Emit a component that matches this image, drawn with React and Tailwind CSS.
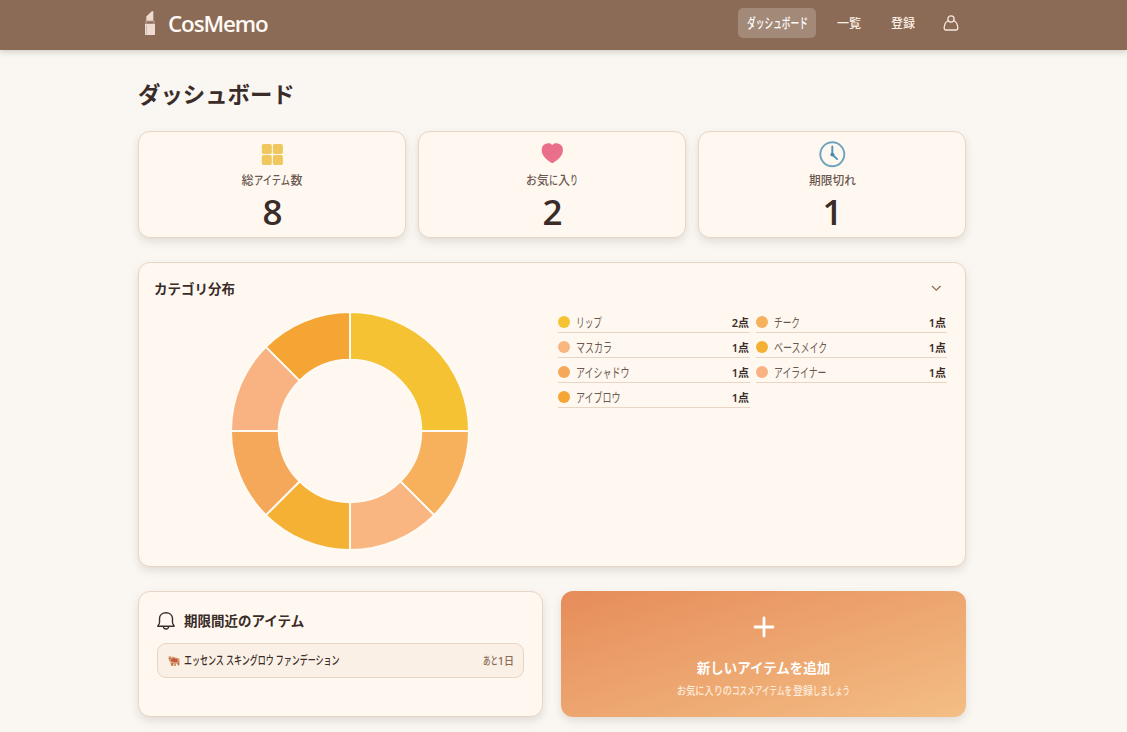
import React from "react";

/* Narrow kana: squeezes a full-width run of text into the given width. */
function Kana({ children, width, size, units }) {
  const n = units || [...children].length;
  return (
    <span className="inline-block whitespace-nowrap align-top" style={{ width }}>
      <span
        className="inline-block origin-left whitespace-nowrap align-top"
        style={{ transform: `scaleX(${width / (n * size)})` }}
      >
        {children}
      </span>
    </span>
  );
}

const card =
  "rounded-[12px] border border-[#e8d5c4] bg-[#fff8f0] shadow-[0_4px_8px_rgba(60,45,35,0.13)]";

const slices = [
  { from: 0, to: 90, color: "#f4c232" },
  { from: 90, to: 135, color: "#f7b05b" },
  { from: 135, to: 180, color: "#f9b681" },
  { from: 180, to: 225, color: "#f5b133" },
  { from: 225, to: 270, color: "#f6a85a" },
  { from: 270, to: 315, color: "#f9b383" },
  { from: 315, to: 360, color: "#f5a533" },
];

const legend = [
  { name: "リップ", width: 26, count: "2", dot: "bg-[#f4c232]" },
  { name: "チーク", width: 26, count: "1", dot: "bg-[#f7b05b]" },
  { name: "マスカラ", width: 36, count: "1", dot: "bg-[#f9b681]" },
  { name: "ベースメイク", width: 54, count: "1", dot: "bg-[#f5b133]" },
  { name: "アイシャドウ", width: 54, count: "1", dot: "bg-[#f6a85a]" },
  { name: "アイライナー", width: 53, count: "1", dot: "bg-[#f9b383]" },
  { name: "アイブロウ", width: 45, count: "1", dot: "bg-[#f5a533]" },
];

function arc({ from, to }) {
  const R = 119;
  const r = 71.3;
  const p = (deg, rad) => {
    const a = ((deg - 90) * Math.PI) / 180;
    return `${120 + rad * Math.cos(a)} ${120 + rad * Math.sin(a)}`;
  };
  return `M${p(from, R)}A${R} ${R} 0 0 1 ${p(to, R)}L${p(to, r)}A${r} ${r} 0 0 0 ${p(from, r)}Z`;
}

function Donut() {
  return (
    <svg width="240" height="240" viewBox="0 0 240 240">
      {slices.map((s) => (
        <path key={s.from} d={arc(s)} fill={s.color} stroke="#fffaf3" strokeWidth="2" />
      ))}
    </svg>
  );
}

function Stat({ icon, label, value }) {
  return (
    <div className={`${card} flex h-[107px] flex-col items-center`}>
      <div className="flex h-[40px] items-end justify-center pb-[4px]">{icon}</div>
      <div className="h-[18px] text-[12px] leading-[18px] font-medium whitespace-nowrap text-[#6b5850]">{label}</div>
      <div className="h-[44px] pl-px font-['Open_Sans'] text-[35px] leading-[44px] font-semibold text-[#3a2c28]">{value}</div>
    </div>
  );
}

export default function App() {
  return (
    <div className="h-[732px] overflow-hidden bg-[#faf7f2] font-['Noto_Sans','Noto_Sans_CJK_JP',sans-serif] text-[#3a2c28]">
      <header className="flex h-[50px] items-center bg-[#8b6b56] pl-[138px] shadow-[0_2px_6px_rgba(60,45,35,0.22)]">
        <div className="-mt-[3px] flex w-[600px] items-center">
          <svg className="-mt-px ml-[6px]" width="12" height="26" viewBox="0 0 12 26">
            <path d="M2.300 11V6.600L7.500 1.400q1.800-1.300 1.800.7V11z" fill="#efdacf" />
            <path d="M1.500 10.500h9V14h-9z" fill="#c3a497" />
            <path d="M2.500 11.500h7v2h-7z" fill="#8a6c60" />
            <path d="M1 14h10v11H1z" fill="#efdacf" />
            <path d="M2.500 15v9.500" stroke="#c9ada0" strokeWidth=".7" />
          </svg>
          <span className="ml-[12px] font-['Open_Sans'] text-[22.400px] leading-[30px] font-semibold tracking-[-1.100px] text-[#fffaf5]">
            CosMemo
          </span>
        </div>
        <nav className="-mt-[4px] flex items-center text-[12px] leading-[18px] text-[#fbefe3]">
          <a className="flex h-[30px] w-[78px] items-center justify-center rounded-[5px] bg-[#a38977] text-[14px] font-medium text-white">
            <Kana width={61} size={14}>ダッシュボード</Kana>
          </a>
          <a className="mt-[2px] ml-[21px] w-[24px] font-medium whitespace-nowrap">一覧</a>
          <a className="mt-[2px] ml-[30px] w-[24px] font-medium whitespace-nowrap">登録</a>
          <svg className="ml-[28px]" width="16" height="18" viewBox="0 0 16 18" fill="none" stroke="#f6e8dc" strokeWidth="1.300">
            <circle cx="8" cy="5" r="3.100" />
            <path d="M5.300 6.500C2.500 7.800 1.500 10.500 1.200 13.500q-.2 2.500 1.800 2.500h10q2 0 1.800-2.500C14.500 10.500 13.500 7.800 10.700 6.500" />
          </svg>
        </nav>
      </header>

      <main className="ml-[138px] w-[828px]">
        <h1 className="pt-[29px] text-[22.400px] leading-[32px] font-bold whitespace-nowrap">ダッシュボード</h1>

        <section className="mt-[20px] grid grid-cols-3 gap-[12px]">
          <Stat
            value="8"
            label={<>総<Kana width={37} size={12}>アイテム</Kana>数</>}
            icon={
              <svg width="28" height="28" viewBox="0 0 28 28" fill="#f0c75e">
                <rect x="3.800" y="4" width="10" height="10" rx="1.800" />
                <rect x="14.900" y="4" width="10" height="10" rx="1.800" />
                <rect x="3.800" y="15.100" width="10" height="10" rx="1.800" />
                <rect x="14.900" y="15.100" width="10" height="10" rx="1.800" />
              </svg>
            }
          />
          <Stat
            value="2"
            label={
              <>
                <Kana width={11} size={12}>お</Kana>気<Kana width={9} size={12}>に</Kana>入
                <Kana width={8} size={12}>り</Kana>
              </>
            }
            icon={
              <svg width="28" height="28" viewBox="0 0 28 28" fill="#ea6f8b">
                <path d="M14.300 5C12.500 3 9.500 3.100 7.200 3.900 4.800 4.800 3.700 7 3.700 9.900c0 6 4.600 9.500 10.600 13.300 6-3.800 10.600-7.300 10.600-13.300 0-2.900-1.100-5.100-3.500-6C19.100 3.100 16.100 3 14.300 5z" />
              </svg>
            }
          />
          <Stat
            value="1"
            label={<Kana width={47} size={12}>期限切れ</Kana>}
            icon={
              <svg width="28" height="28" viewBox="0 0 28 28" fill="none" stroke="#6fa3be" strokeLinecap="round">
                <circle cx="14.300" cy="14.300" r="12" strokeWidth="1.900" />
                <path d="M14.300 6.500v8l4.800 4.600" stroke="#5194b5" strokeWidth="1.900" />
                <circle cx="14.300" cy="14.500" r="1.500" fill="#4389ad" stroke="#4389ad" />
              </svg>
            }
          />
        </section>

        <section className={`${card} mt-[24px] h-[305px]`}>
          <div className="flex h-[48px] items-center justify-between pt-[3px] pr-[23px] pl-[15px]">
            <h2 className="text-[13.500px] leading-[20px] font-bold">カテゴリ分布</h2>
            <svg className="-mt-px" width="12" height="12" viewBox="0 0 12 12" fill="none" stroke="#8b6b56" strokeWidth="1.200">
              <path d="M2 4 6.300 8.200 10.600 4" />
            </svg>
          </div>
          <div className="flex items-start pl-[91px]">
            <Donut />
            <div className="mt-[1px] ml-[88px] grid grid-cols-[192px_191px] gap-x-[6px] gap-y-[4px]">
              {legend.map((l) => (
                <div key={l.name} className="flex h-[21px] items-center border-b border-[#e8d5c4] text-[13px] leading-[18px]">
                  <span className={`mr-[6px] size-[12px] rounded-full ${l.dot}`} />
                  <span className="text-[#6b5850]">
                    <Kana width={l.width} size={13}>{l.name}</Kana>
                  </span>
                  <span className="ml-auto pt-[2px] pr-px text-[11px] font-semibold">{l.count}点</span>
                </div>
              ))}
            </div>
          </div>
        </section>

        <section className="mt-[24px] grid grid-cols-2 gap-[18px]">
          <div className={`${card} h-[126px] px-[18px] pt-[18px]`}>
            <h2 className="flex h-[22px] items-center text-[13.500px] leading-[20px] font-bold whitespace-nowrap">
              <svg className="mr-[8px]" width="19" height="20" viewBox="0 0 19 20" fill="none" stroke="#3a2c28" strokeWidth="1.400" strokeLinejoin="round">
                <path d="M.8 15.200 2.300 12.500C2.800 11.500 2.500 9 2.500 7.500 2.700 4 5.600 1.800 9 1.800S15.300 4 15.500 7.500c.1 1.500-.3 4 .2 5l1.500 2.700z" />
                <path d="M6.300 15.500c.3 3.300 5.100 3.300 5.400 0" />
              </svg>
              期限間近のアイテム
            </h2>
            <div className="mt-[11px] flex h-[35px] items-center rounded-[9px] border border-[#e8d5c4] bg-[#faf0e6] pr-[9px] pl-[10px] text-[12px] leading-[16px]">
              <svg className="mr-[4px]" width="12" height="12" viewBox="0 0 12 12">
                <path d="M.5 1.500 2.500 1l1 1.500L5 1.500 7 2.500 10 3l1.500 1V10.500H9.500V9L8 8.500v2.500H6L5 8.500V11H3L2.500 7 1 6z" fill="#d99a70" />
                <path d="M3 4.500 5.500 3l4 1.500V7H6L3 6z" fill="#c4553e" />
                <path d="M.8 3.500h1.700M4 8v2.500M10.500 7.500v2.500" stroke="#a8603f" strokeWidth=".9" />
              </svg>
              <span className="font-medium">
                <Kana width={156} size={12} units={19.5}>エッセンス スキングロウ ファンデーション</Kana>
              </span>
              <span className="ml-auto flex text-[11px] font-medium text-[#8b6b56]">
                <Kana width={15} size={11}>あと</Kana>1<Kana width={10} size={11}>日</Kana>
              </span>
            </div>
          </div>

          <div className="flex h-[126px] flex-col items-center rounded-[12px] bg-linear-to-br from-[#e68c5a] to-[#f3be84] text-white shadow-[0_4px_8px_rgba(60,45,35,0.13)]">
            <svg className="mt-[25px]" width="22" height="22" viewBox="0 0 22 22" stroke="#fff" strokeWidth="2.800" strokeLinecap="round">
              <path d="M11 2v18M2 11h18" />
            </svg>
            <div className="mt-[20px] text-[13.500px] leading-[20px] font-bold">新しいアイテムを追加</div>
            <div className="mt-[5px] text-[11.500px] leading-[16px] font-medium whitespace-nowrap text-[#fdebdc]">
              <Kana width={55} size={11.5}>お気に入りの</Kana>
              <Kana width={61} size={11.5}>コスメアイテムを</Kana>
              <Kana width={20} size={11.5}>登録</Kana>
              <Kana width={37} size={11.5}>しましょう</Kana>
            </div>
          </div>
        </section>
      </main>
    </div>
  );
}
